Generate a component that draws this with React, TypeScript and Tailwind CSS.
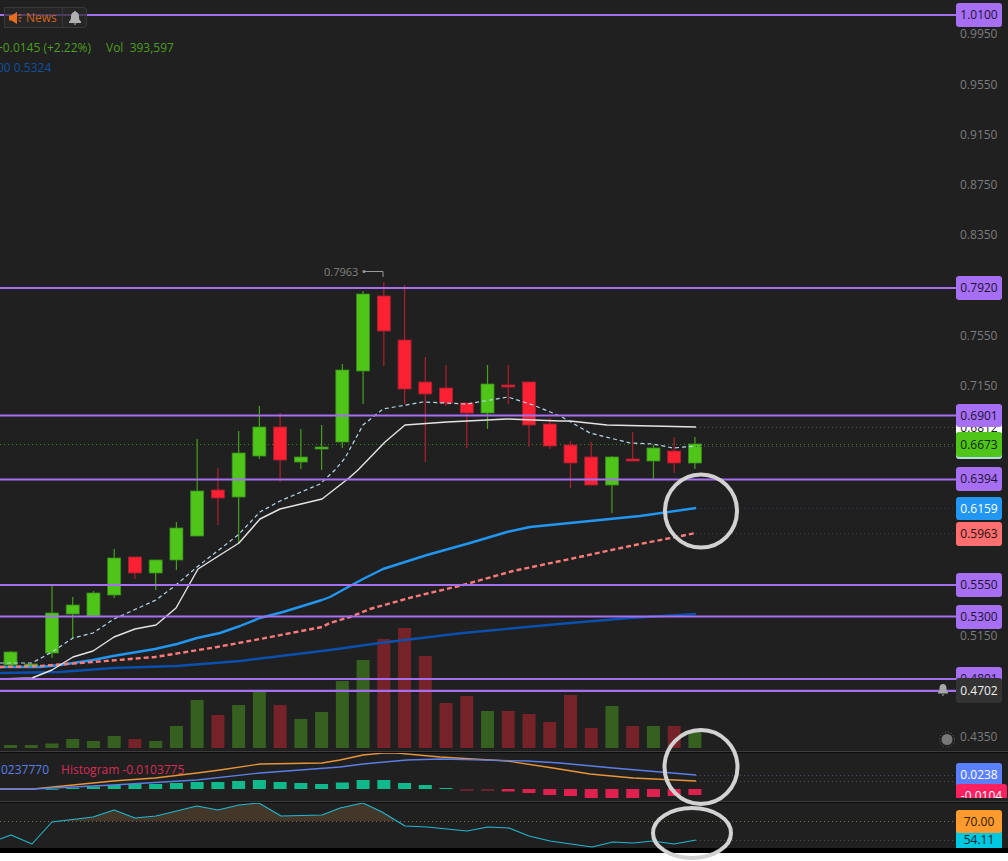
const UP = '#4fc51a';
const DOWN = '#fb2032';

// [wick top, body top, body bottom, wick bottom, up?]
const candles: [number, number, number, number, boolean][] = [
  [651, 652, 665, 665, true],
  [664, 664, 667, 667, true],
  [586, 613, 653, 658, true],
  [597, 605, 614, 638, true],
  [591, 593, 616, 616, true],
  [549, 558, 595, 598, true],
  [557, 557, 573, 579, false],
  [560, 560, 573, 590, true],
  [522, 528, 560, 570, true],
  [439, 491, 536, 536, true],
  [468, 490, 498, 525, false],
  [431, 453, 497, 543, true],
  [406, 427, 456, 459, true],
  [413, 427, 460, 482, false],
  [429, 457, 462, 469, true],
  [425, 447, 449, 470, true],
  [364, 370, 442, 448, true],
  [291, 294, 371, 404, true],
  [282, 296, 331, 366, false],
  [285, 340, 389, 404, false],
  [357, 382, 394, 462, false],
  [365, 388, 403, 406, false],
  [403, 403, 413, 448, false],
  [365, 384, 413, 429, true],
  [365, 385, 387, 404, false],
  [382, 382, 425, 447, false],
  [418, 424, 446, 449, false],
  [441, 445, 463, 488, false],
  [442, 457, 485, 485, false],
  [456, 457, 485, 513, true],
  [432, 459, 461, 461, false],
  [445, 448, 461, 479, true],
  [437, 451, 463, 473, false],
  [437, 444, 463, 469, true],
];

const volumeTops = [
  745, 745, 743.5, 739, 741, 736, 739, 741, 726, 700, 715, 705, 692, 705, 719, 712, 681, 660, 639, 628, 656, 703, 696,
  711, 711, 714, 722, 695, 728, 706, 726, 726, 726, 732,
];

// histogram end per bar, null where the bar is not drawn; baseline is y=789
const histogram: (number | null)[] = [
  null, null, 789, 788, 786.5, 785, 784, 784, 783, 782, 782, 781, 780, 782, 783, 784, 782.5, 780, 780, 783, 785, 788,
  791, 791, 791.5, 793, 795, 796, 798, 798, 798, 797, 796, 795,
];

const whiteLine = '0,679 32,678 52,670 73,657 93,651 114,637 135,629 156,625 176,608 198,569 220,555 239,543 260,519 280,509 301,504 322,499 349,478 358,470 385,442 405,425 447,422 507,419 560,421 570,421 607,425 696,427';
const dashLine = '0,663 32,663 52,652 73,638 93,633 114,619 156,600 176,585 197,567 238,535 260,512 280,501 320,484 335,470 345,458 363,425 383,409 423,402 467,404 508,397 533,405 560,416 590,433 630,443 653,444 673,448 696,446';
const blueLine = '0,667 40,667 60,665 93,660 113,656 155,649 177,644 197,638 220,633 240,626 260,618 283,612 322,600 330,597 350,586 363,579 383,569 427,555 470,543 507,532 530,527 570,523 590,521 640,516 696,508';
const redLine = '0,667 40,666 93,662 155,657 217,647 260,639 322,627 330,623 350,617 370,609 413,597 463,585 513,571 570,559 630,546 696,533';
const navyLine = '0,673 60,672 113,668 177,666 240,661 330,650 380,643 463,633 570,623 630,618 696,614';
const macdBlue = '0,789 33,789 113,785 197,780 260,773 340,767 363,764 407,760 440,759 527,761 560,763 613,768 696,775';
const macdOrange = '0,789 33,789 93,783 113,781 155,778 197,773 220,770 260,764 322,763 340,760 363,755 383,753 397,753 440,757 473,759 507,761 553,768 590,774 633,778 696,781';
const rsiLine = '0,839 11,835 32,844 52,822 93,817 114,810 135,818 156,816 197,806 218,810 239,805 259,803 281,816 322,815 340,808 363,803 382,812 405,826 427,827 467,831 488,827 509,828 529,836 550,841 592,847 613,842 633,843 653,841 674,844 696,840';
const rsiFill = '52,821 93,817 114,810 135,818 156,816 197,806 218,810 239,805 259,803 281,816 322,815 340,808 363,803 382,812 396,821';

const levels = [15, 288, 415.5, 479.5, 585, 616.5, 679, 690.8];
const ticks = [
  { label: '0.9950', pos: 'top-[25px]' },
  { label: '0.9550', pos: 'top-[76px]' },
  { label: '0.9150', pos: 'top-[126px]' },
  { label: '0.8750', pos: 'top-[176px]' },
  { label: '0.8350', pos: 'top-[226px]' },
  { label: '0.7550', pos: 'top-[327px]' },
  { label: '0.7150', pos: 'top-[377px]' },
  { label: '0.5150', pos: 'top-[627px]' },
  { label: '0.4350', pos: 'top-[728px]' },
];

const purple = 'bg-[#a76ef6] text-[#1c1230]';
const tags = [
  { label: '1.0100', cls: 'top-[3px] h-[24px] ' + purple },
  { label: '0.7920', cls: 'top-[276px] h-[24px] ' + purple },
  { label: '0.6812', cls: 'top-[421px] h-[14px] bg-white text-[#222222]' },
  { label: '', cls: 'top-[446px] h-[13px] bg-[#b5dce8]' },
  { label: '0.6673', cls: 'top-[432px] h-[25px] bg-[#4fc51a] text-[#10240a]' },
  { label: '0.6901', cls: 'top-[404px] h-[23px] ' + purple },
  { label: '0.6394', cls: 'top-[467px] h-[24px] ' + purple },
  { label: '0.6159', cls: 'top-[497px] h-[23px] bg-[#2196f3] text-white' },
  { label: '0.5963', cls: 'top-[522px] h-[24px] bg-[#ff6f6f] text-[#2a1010]' },
  { label: '0.5550', cls: 'top-[573px] h-[24px] ' + purple },
  { label: '0.5300', cls: 'top-[605px] h-[24px] ' + purple },
  { label: '0.4801', cls: 'top-[667px] h-[24px] ' + purple },
  { label: '0.4702', cls: 'top-[678px] h-[25px] bg-[#333333] text-[#eeeeee]' },
];

const barX = (i: number) => 10.5 + 20.74 * i;

function Tag({ label, cls }: { label: string; cls: string }) {
  return (
    <div className={'absolute left-0 w-[46px] flex items-center justify-center rounded-[3px] text-xs ' + cls}>
      {label}
    </div>
  );
}

function MainChart() {
  return (
    <svg className="block" width="956" height="751" viewBox="0 0 956 751" fill="none">
      {volumeTops.map((top, i) => (
        <rect key={i} x={barX(i) - 6.5} y={top} width="13" height={748 - top} fill={candles[i][4] ? '#36601f' : '#752228'} />
      ))}
      <line x1="0" x2="956" y1="444.5" y2="444.5" stroke="#3f7d1e" strokeDasharray="1 3" />
      {candles.map(([wt, bt, bb, wb, up], i) => (
        <g key={i}>
          <line x1={barX(i)} x2={barX(i)} y1={wt} y2={wb} stroke={up ? '#46a01c' : '#b01f2e'} strokeWidth="1.2" />
          <rect
            x={barX(i) - 6.5}
            y={bt}
            width="13"
            height={bb - bt}
            fill={up ? UP : DOWN}
            stroke={up ? '#3a8a1e' : '#a52030'}
            strokeWidth="0.8"
          />
        </g>
      ))}
      <line x1="696" x2="956" y1="427.5" y2="427.5" stroke="#555555" strokeDasharray="1 3" />
      <line x1="696" x2="956" y1="446.5" y2="446.5" stroke="#46555c" strokeDasharray="1 3" />
      <line x1="696" x2="956" y1="508.5" y2="508.5" stroke="#1d3d5c" strokeDasharray="1 3" />
      <line x1="696" x2="956" y1="533.5" y2="533.5" stroke="#553333" strokeDasharray="1 3" />
      <polyline points={navyLine} stroke="#0a50b0" strokeWidth="2.4" strokeLinejoin="round" />
      <polyline points={blueLine} stroke="#2196f3" strokeWidth="2.4" strokeLinejoin="round" />
      <polyline points={redLine} stroke="#ff7b7b" strokeWidth="2.4" strokeDasharray="5 3" />
      <polyline points={whiteLine} stroke="#e4e4e4" strokeWidth="1.4" strokeLinejoin="round" />
      <polyline points={dashLine} stroke="#b4d8e8" strokeWidth="1.2" strokeDasharray="4 3" />
      {levels.map((y) => (
        <line key={y} x1="0" x2="956" y1={y} y2={y} stroke="#a56ff0" strokeWidth="2.2" />
      ))}
      <path d="M364 271.5H383V277" stroke="#999999" strokeWidth="1" />
      <circle cx="364" cy="271.5" r="1.5" fill="#999999" />
      <path d="M943 684c-2.5 0-3.5 2-3.5 4.5 0 2-.5 3-1.500 4v1h10v-1c-1-1-1.500-2-1.500-4 0-2.500-1-4.500-3.500-4.500zM941.500 694.500h3l-1.500 1.500z" fill="#a8a8a8" />
      <circle cx="947" cy="739.5" r="5.500" fill="#777777" />
      <circle cx="947" cy="739.5" r="7.500" stroke="#666666" strokeDasharray="1 2" />
    </svg>
  );
}

function MacdChart() {
  return (
    <svg className="block" width="956" height="47" viewBox="0 753 956 47" fill="none">
      {histogram.map((y, i) => {
        if (y === null) return null;
        const dim = i === 22 || i === 23;
        const fill = y <= 789 ? '#10b98a' : dim ? '#6e2033' : '#e0204f';
        return <rect key={i} x={barX(i) - 6.5} y={Math.min(y, 789)} width="13" height={Math.abs(y - 789) || 0.8} fill={fill} />;
      })}
      <line x1="696" x2="956" y1="775.5" y2="775.5" stroke="#44506e" strokeDasharray="1 3" />
      <line x1="696" x2="956" y1="781.5" y2="781.5" stroke="#5c4a30" strokeDasharray="1 3" />
      <polyline points={macdOrange} stroke="#e8953a" strokeWidth="1.3" strokeLinejoin="round" />
      <polyline points={macdBlue} stroke="#5b7fe8" strokeWidth="1.3" strokeLinejoin="round" />
    </svg>
  );
}

function RsiChart() {
  return (
    <svg className="block" width="956" height="45" viewBox="0 803 956 45" fill="none">
      <polygon points={rsiFill} fill="#43372a" />
      <line x1="0" x2="956" y1="821.5" y2="821.5" stroke="#8a6f4a" strokeDasharray="1 3" />
      <line x1="696" x2="956" y1="840.5" y2="840.5" stroke="#3d5258" strokeDasharray="1 3" />
      <polyline points={rsiLine} stroke="#22b8d0" strokeWidth="1.1" strokeLinejoin="round" />
    </svg>
  );
}

function Separator() {
  return <div className="h-[2px] bg-[#0c0c0c] border-t border-[#3c3c3c]" />;
}

export default function App() {
  return (
    <div className="relative w-[1008px] h-[861px] overflow-hidden bg-white font-['Open_Sans',sans-serif]">
      <div className="flex bg-[#202020] h-[751px]">
        <div className="relative w-[956px]">
          <MainChart />
          <div className="absolute left-[4px] top-[7px] flex h-[21px] w-[83px] items-center rounded-r-[4px] border border-l-0 border-[#383838] bg-[#2a2a2a]/70">
            <div className="flex h-full w-[59px] items-center gap-[4px] border-x border-[#383838] pl-[4px] text-xs text-[#d0651c]">
              <svg width="13" height="12" viewBox="0 0 13 12" fill="#e8701c" className="shrink-0">
                <path d="M0 3.5h2.5L8 0v12L2.5 8.5H0z" />
                <path d="M9.5 3.5l2.5-1M9.5 6H12.5M9.5 8.5l2.5 1" stroke="#e8701c" strokeWidth="1" />
              </svg>
              News
            </div>
            <svg width="12" height="14" viewBox="0 0 12 14" fill="#b0b0b0" className="ml-[6px]">
              <path d="M6 0c-.8 0-1 .5-1 1C3 1.5 2 3.3 2 5.5 2 8 1.5 9.5 0 10.5V12h12v-1.5C10.5 9.500 10 8 10 5.500 10 3.300 9 1.500 7 1c0-.5-.2-1-1-1zM4.500 12.500h3L6 14z" />
            </svg>
          </div>
          <div className="absolute -left-[4px] top-[39px] flex whitespace-nowrap text-xs leading-[18px] text-[#4b9e1e]">
            <span className="w-[110px]">+0.0145 (+2.22%)</span>
            <span>Vol&nbsp; 393,597</span>
          </div>
          <div className="absolute -left-[3px] top-[59px] whitespace-nowrap text-xs leading-[18px] text-[#0f50a0]">
            00 0.5324
          </div>
          <div className="absolute left-[324px] top-[264px] text-[11px] leading-[16px] text-[#808080]">0.7963</div>
        </div>
        <div className="relative flex-1">
          {ticks.map((t) => (
            <div key={t.label} className={'absolute left-[4px] text-xs leading-[18px] text-[#7c7c7c] ' + t.pos}>
              {t.label}
            </div>
          ))}
          {tags.map((t) => (
            <Tag key={t.label || 'peek'} label={t.label} cls={t.cls} />
          ))}
        </div>
      </div>
      <Separator />
      <div className="flex h-[48px] bg-[#202020]">
        <div className="relative w-[956px]">
          <MacdChart />
          <div className="absolute left-[1px] top-[8px] flex gap-[12px] whitespace-nowrap text-xs leading-[18px]">
            <span className="text-[#5b7fe8]">0237770</span>
            <span className="text-[#d82c58]">Histogram -0.0103775</span>
          </div>
        </div>
        <div className="relative flex-1 h-[45px] overflow-hidden">
          <div className="absolute left-0 top-[10px] flex h-[24px] w-[46px] items-center justify-center rounded-[3px] bg-[#5b80ff] text-xs text-white">
            0.0238
          </div>
          <div className="absolute left-0 top-[31px] flex h-[24px] w-[51px] items-center justify-center rounded-[3px] bg-[#ff2060] text-xs text-white">
            -0.0104
          </div>
        </div>
      </div>
      <Separator />
      <div className="flex h-[45px] bg-[#202020]">
        <div className="w-[956px]">
          <RsiChart />
        </div>
        <div className="relative flex-1 overflow-hidden">
          <div className="absolute left-0 top-[25px] flex h-[24px] w-[46px] items-center justify-center bg-[#00c8e0] text-xs text-[#06242a]">
            54.11
          </div>
          <div className="absolute left-0 top-[7px] flex h-[23px] w-[46px] items-center justify-center rounded-[3px] bg-[#ff9a2e] text-xs text-[#2a1a05]">
            70.00
          </div>
        </div>
      </div>
      <div className="h-[5px] bg-black" />
      {/* hand drawn marks on top of everything */}
      <svg className="absolute left-0 top-0" width="1008" height="861" fill="none">
        <ellipse cx="701" cy="511" rx="36" ry="36.5" stroke="#d2d2d2" strokeWidth="4" />
        <ellipse cx="701" cy="767" rx="36.5" ry="37" stroke="#d2d2d2" strokeWidth="4" />
        <ellipse cx="692" cy="833" rx="39" ry="25" stroke="#d2d2d2" strokeWidth="4" />
      </svg>
    </div>
  );
}
